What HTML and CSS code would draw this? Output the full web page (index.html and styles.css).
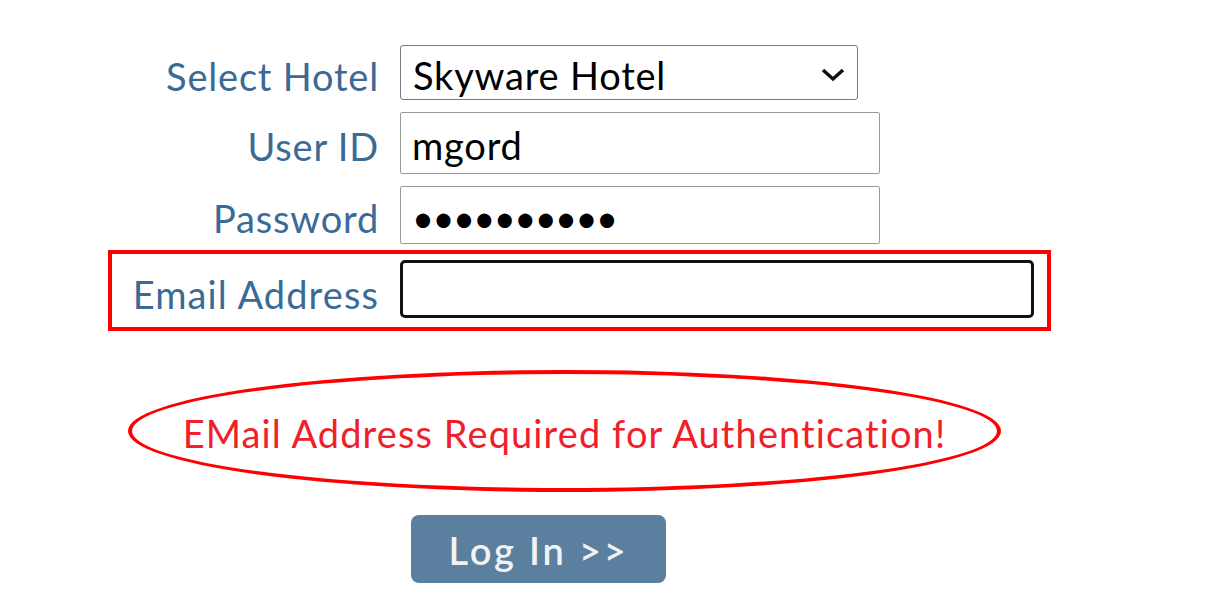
FILE: index.html
```html
<!DOCTYPE html>
<html lang="en">
<head>
    <meta charset="UTF-8">
    <title>Hotel Log In</title>
    <link rel="stylesheet" href="styles.css">
</head>
<body>
    <form id="login-form" class="login">
        <div class="row row-hotel">
            <label for="hotel">Select Hotel</label>
            <div class="select-wrap">
                <select id="hotel">
                    <option>Skyware Hotel</option>
                </select>
                <svg class="chevron" width="26" height="16" viewBox="0 0 26 16">
                    <path d="M3 3 L13 12 L23 3" fill="none" stroke="#111" stroke-width="3.5"/>
                </svg>
            </div>
        </div>

        <div class="row row-user">
            <label for="userid">User ID</label>
            <input type="text" id="userid" class="field" value="mgord">
        </div>

        <div class="row row-pass">
            <label for="password">Password</label>
            <input type="password" id="password" class="field" value="xxxxxxxxxx">
        </div>

        <div class="row row-email flagged">
            <label for="email">Email Address</label>
            <input type="email" id="email" class="field field-email">
        </div>

        <div class="error-msg">EMail Address Required for Authentication!</div>

        <button type="submit" class="btn-login">Log In &gt;&gt;</button>
    </form>
</body>
</html>
```

FILE: styles.css
```css
body {
    margin: 0;
    background-color: #fff;
    font-family: "Lato", "Open Sans", sans-serif;
}

.login {
    padding-top: 45px;
    padding-left: 108px;
}

.row {
    display: flex;
    align-items: center;
    border: 4px solid transparent;
    width: 935px;
}

.row label {
    width: 267px;
    margin-right: 21px;
    padding-top: 6px;
    text-align: right;
    font-size: 38px;
    letter-spacing: 0.8px;
    color: #3a6a96;
}

.row-hotel {
    margin-top: -4px;
}

.row-user {
    margin-top: 4px;
}

.row-pass {
    margin-top: 4px;
}

.row-email {
    margin-top: 2px;
    padding: 6px 0 9px 0;
}

.row-email label {
    padding-top: 10px;
    letter-spacing: 1.1px;
}

.flagged {
    border-color: #ff0000;
}

.select-wrap {
    position: relative;
    width: 458px;
    height: 55px;
}

select {
    appearance: none;
    width: 100%;
    height: 100%;
    padding: 4px 0 0 12px;
    font-family: "Lato", sans-serif;
    font-size: 38px;
    letter-spacing: 0.8px;
    color: #000;
    background-color: #fff;
    border: 1px solid #7a7a7a;
    border-radius: 3px;
}

.chevron {
    position: absolute;
    right: 12px;
    top: 22px;
}

.field {
    box-sizing: border-box;
    width: 480px;
    height: 62px;
    padding: 4px 11px 0 11px;
    font-family: "Lato", sans-serif;
    font-size: 38px;
    letter-spacing: 0.8px;
    color: #000;
    border: 1px solid #999;
    border-radius: 2px;
}

.row-pass .field {
    height: 58px;
    letter-spacing: -1.6px;
}

.field-email {
    width: 634px;
    height: 58px;
    border: 3px solid #111;
    border-radius: 5px;
}

.error-msg {
    box-sizing: border-box;
    width: 873px;
    height: 122px;
    margin: 39px 0 0 20px;
    padding-top: 4px;
    border: 4px solid #ff0000;
    border-radius: 50%;
    display: flex;
    align-items: center;
    justify-content: center;
    font-size: 38px;
    letter-spacing: 1.1px;
    color: #f0202a;
}

.btn-login {
    display: block;
    width: 255px;
    height: 68px;
    margin: 23px 0 0 303px;
    padding-top: 2px;
    font-family: "Lato", sans-serif;
    font-size: 38px;
    font-weight: 600;
    letter-spacing: 2.8px;
    color: #f2f2f2;
    background-color: #5b7f9f;
    border: none;
    border-radius: 8px;
    cursor: pointer;
}
```
